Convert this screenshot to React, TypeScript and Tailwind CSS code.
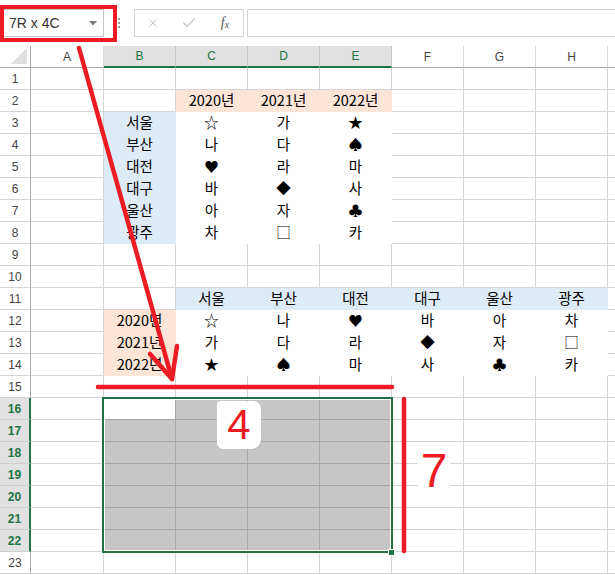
import React from 'react';
import { X, Check } from 'lucide-react';

const COLS = ['A', 'B', 'C', 'D', 'E', 'F', 'G', 'H'];
const ROWS = Array.from({ length: 23 }, (_, i) => i + 1);

// cell text by row, columns A..H
const DATA: Record<number, string[]> = {
  2: ['', '', '2020년', '2021년', '2022년'],
  3: ['', '서울', '☆', '가', '★'],
  4: ['', '부산', '나', '다', '♠'],
  5: ['', '대전', '♥', '라', '마'],
  6: ['', '대구', '바', '◆', '사'],
  7: ['', '울산', '아', '자', '♣'],
  8: ['', '광주', '차', '□', '카'],
  11: ['', '', '서울', '부산', '대전', '대구', '울산', '광주'],
  12: ['', '2020년', '☆', '나', '♥', '바', '아', '차'],
  13: ['', '2021년', '가', '다', '라', '◆', '자', '□'],
  14: ['', '2022년', '★', '♠', '마', '사', '♣', '카'],
};

const inSelRow = (r: number) => r >= 16 && r <= 22;
const inSel = (r: number, c: number) => inSelRow(r) && c >= 1 && c <= 4;

function cellTone(r: number, c: number) {
  if (r === 2 && c >= 2 && c <= 4) return 'bg-[#fce4d6] border-[#fce4d6]';
  if (r >= 3 && r <= 8 && c === 1) return 'bg-[#ddebf7] border-[#ddebf7]';
  if (r >= 3 && r <= 8 && c >= 2 && c <= 4) return 'bg-white border-white';
  if (r === 11 && c >= 2) return 'bg-[#ddebf7] border-[#ddebf7]';
  if (r >= 12 && r <= 14 && c === 1) return 'bg-[#fce4d6] border-[#fce4d6]';
  if (r >= 12 && r <= 14 && c >= 2) return 'bg-white border-white';
  if (r === 16 && c === 1) return 'bg-white border-[#a6a6a6]';
  if (inSel(r, c)) return 'bg-[#c6c6c6] border-[#a6a6a6]';
  return 'bg-white border-[#d4d4d4]';
}

const Toolbar: React.FC = () => (
  <div className="h-[46px] flex items-start pt-[9px]">
    <div className="relative w-[104px] h-[28px] border border-[#c6c6c6] flex items-center pl-[8px] text-[14px] text-[#333]">
      7R x 4C
      <svg className="absolute right-[6px] top-[11px]" width="8" height="5" viewBox="0 0 8 5">
        <path d="M0 0h8L4 4.5z" fill="#7a7a7a" />
      </svg>
    </div>
    <div className="w-[30px] flex flex-col items-center gap-[2px] pt-[9px]">
      <span className="w-[2px] h-[2px] bg-[#9a9a9a]" />
      <span className="w-[2px] h-[2px] bg-[#9a9a9a]" />
      <span className="w-[2px] h-[2px] bg-[#9a9a9a]" />
    </div>
    <div className="w-[110px] h-[28px] border border-[#d4d4d4] flex items-center">
      <div className="w-[36px] flex justify-center">
        <X size={14} strokeWidth={1.6} color="#c2c2c2" />
      </div>
      <div className="w-[36px] flex justify-center">
        <Check size={16} strokeWidth={1.8} color="#c2c2c2" />
      </div>
      <div className="w-[36px] flex justify-center font-['Liberation_Serif',serif] italic text-[14px] text-[#555] leading-none">
        f<span className="text-[10px] self-end">x</span>
      </div>
    </div>
    <div className="ml-[3px] flex-1 h-[28px] border border-r-0 border-[#d4d4d4]" />
  </div>
);

const Sheet: React.FC = () => (
  <div className="grid grid-cols-[31px_73px_repeat(7,72px)_1fr] auto-rows-[22px] text-[12px]">
    <div className="relative border-r border-b border-[#ababab]">
      <svg className="absolute left-0 top-0" width="30" height="21" viewBox="0 0 30 21">
        <polygon points="27,2 27,18 11,18" fill="#dfdfdf" />
      </svg>
    </div>
    {COLS.map((l, i) =>
      i >= 1 && i <= 4 ? (
        <div
          key={l}
          className="flex items-center justify-center bg-[#e1e1e1] text-[#217346] border-r border-r-[#c8c8c8] border-b-2 border-b-[#217346]"
        >
          {l}
        </div>
      ) : (
        <div
          key={l}
          className="flex items-center justify-center bg-white text-[#444] border-r border-r-[#dadada] border-b border-b-[#ababab]"
        >
          {l}
        </div>
      )
    )}
    <div className="border-b border-b-[#ababab]" />

    {ROWS.map((r) => (
      <React.Fragment key={r}>
        {inSelRow(r) ? (
          <div className="flex items-center justify-center bg-[#e1e1e1] text-[#217346] font-bold border-r-2 border-r-[#217346] border-b border-b-[#cfcfcf]">
            {r}
          </div>
        ) : (
          <div className="flex items-center justify-center bg-white text-[#444] border-r border-r-[#ababab] border-b border-b-[#d4d4d4]">
            {r}
          </div>
        )}
        {COLS.map((_, c) => (
          <div
            key={c}
            className={`flex items-center justify-center border-r border-b font-['Noto_Sans_CJK_KR',sans-serif] text-[14.5px] leading-none text-black ${cellTone(r, c)}`}
          >
            {DATA[r]?.[c] ?? ''}
          </div>
        ))}
        <div className="border-b border-[#d4d4d4]" />
      </React.Fragment>
    ))}
  </div>
);

export default function App() {
  return (
    <div className="relative w-[615px] h-[575px] overflow-hidden bg-white font-['Liberation_Sans',sans-serif]">
      <Toolbar />
      <Sheet />

      {/* selection frame B16:E22 */}
      <div className="absolute left-[102px] top-[397px] w-[291px] h-[156px] border-2 border-[#217346] shadow-[inset_0_0_0_1px_white]" />
      <div className="absolute left-[388px] top-[549px] w-[7px] h-[7px] bg-[#217346] border border-white" />

      {/* red annotations */}
      <div className="absolute left-0 top-[5px] w-[117px] h-[37px] border-4 border-[#ed1c24]" />
      <svg className="absolute left-0 top-0 pointer-events-none" width="615" height="575" viewBox="0 0 615 575">
        <g stroke="#ed1c24" strokeWidth="4.5" strokeLinecap="round" strokeLinejoin="round" fill="none">
          <line x1="79" y1="48" x2="172" y2="379" />
          <polyline points="150,354 172,379 177,346" />
          <line x1="98" y1="387" x2="392" y2="387" />
          <line x1="404" y1="399" x2="404" y2="551" />
        </g>
      </svg>
      <div className="absolute left-[217px] top-[401px] w-[44px] h-[48px] bg-white rounded-tl-[4px] rounded-tr-[8px] rounded-bl-[6px] rounded-br-[10px] flex items-center justify-center text-[42px] leading-none text-[#ed1c24]">
        4
      </div>
      <div className="absolute left-[418px] top-[448px] w-[32px] h-[46px] bg-white flex items-center justify-center text-[48px] leading-none text-[#ed1c24]">
        7
      </div>
    </div>
  );
}
